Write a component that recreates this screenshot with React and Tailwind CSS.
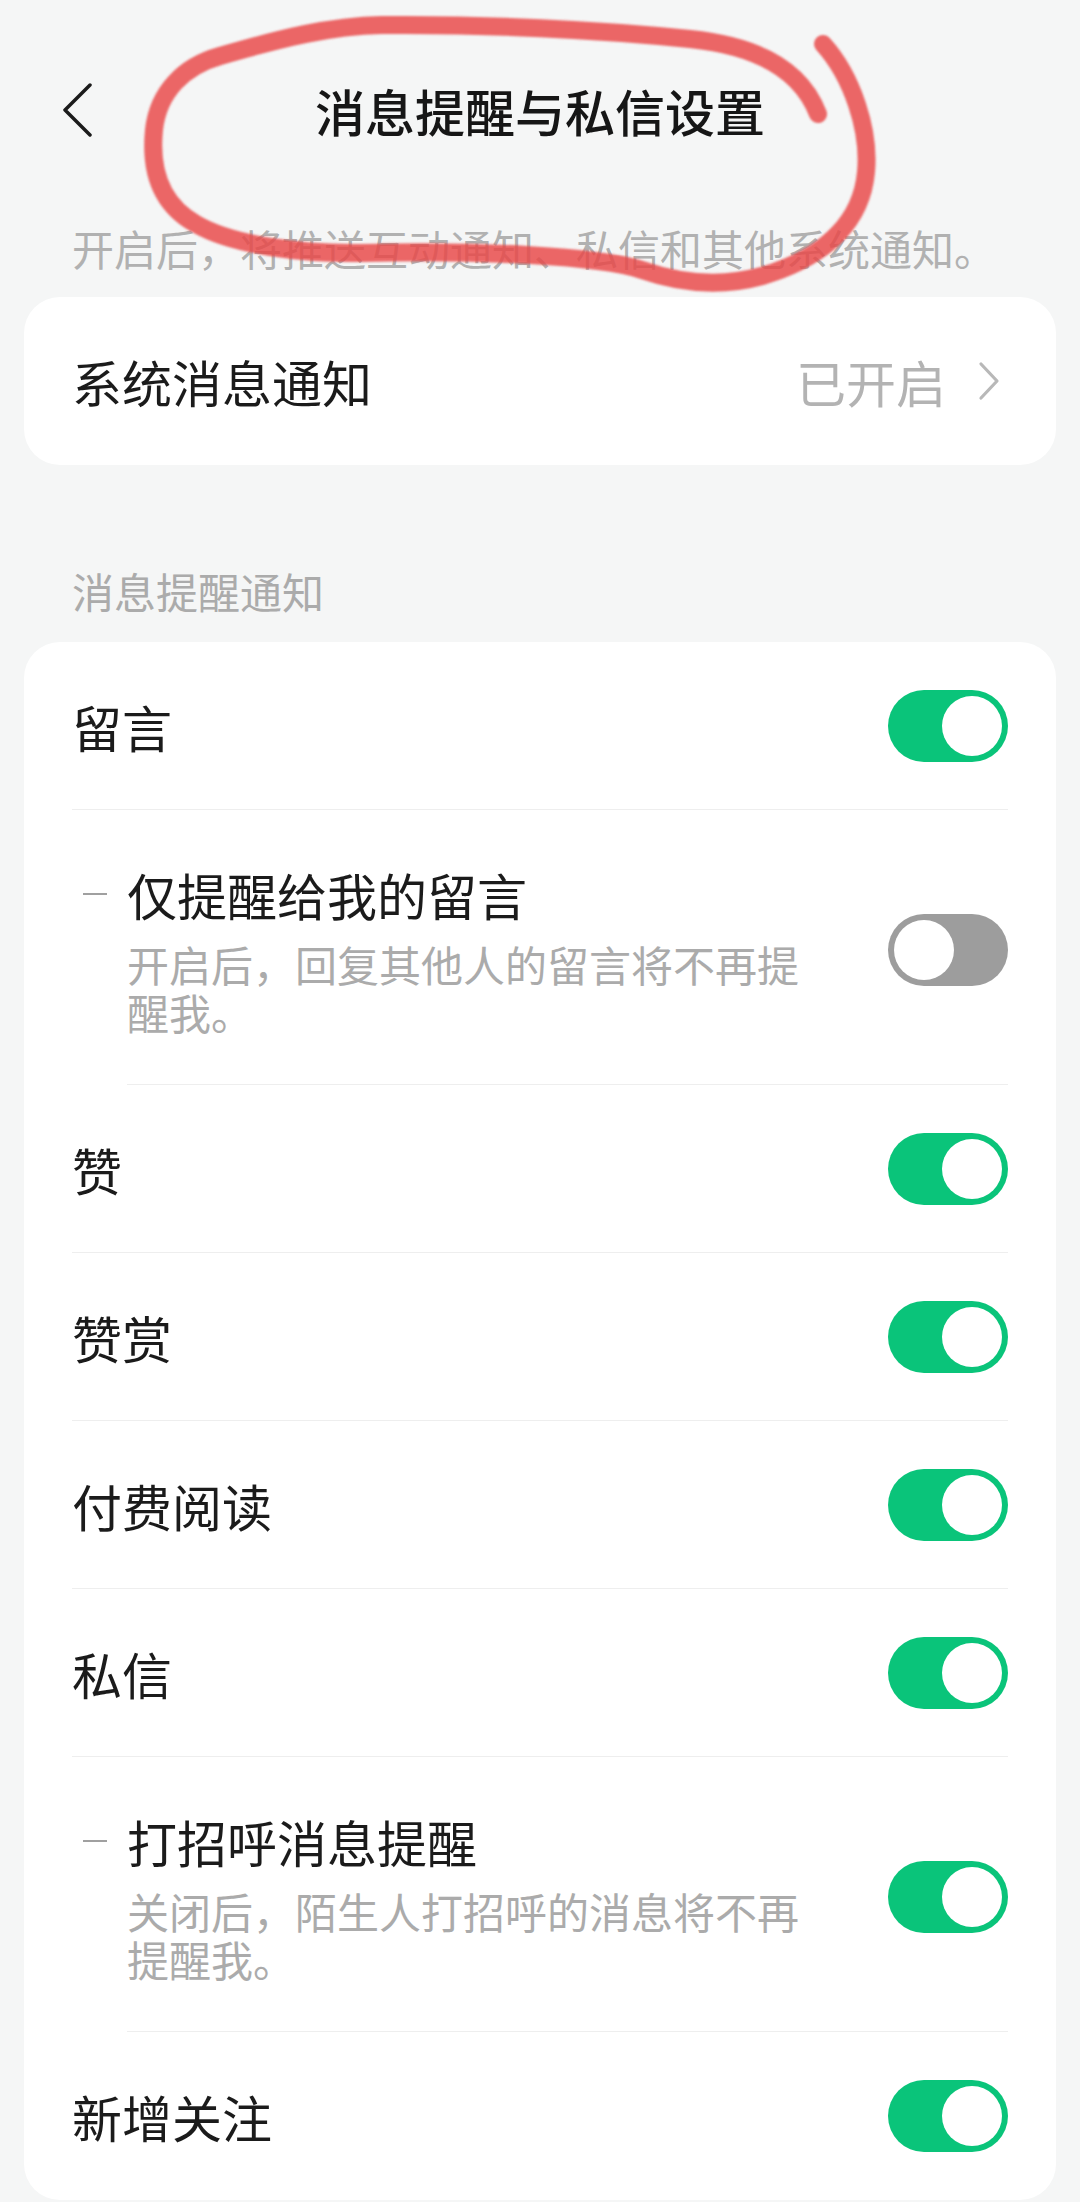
import React, { useState } from "react";

const items = [
  { key: "comment", label: "留言", on: true },
  {
    key: "onlyMine",
    label: "仅提醒给我的留言",
    desc: "开启后，回复其他人的留言将不再提醒我。",
    on: false,
    sub: true,
  },
  { key: "like", label: "赞", on: true },
  { key: "reward", label: "赞赏", on: true },
  { key: "paid", label: "付费阅读", on: true },
  { key: "dm", label: "私信", on: true },
  {
    key: "greet",
    label: "打招呼消息提醒",
    desc: "关闭后，陌生人打招呼的消息将不再提醒我。",
    on: true,
    sub: true,
  },
  { key: "follow", label: "新增关注", on: true },
];

function Toggle({ on, onClick }) {
  return (
    <button
      onClick={onClick}
      className={`flex h-[72px] w-[120px] shrink-0 items-center rounded-full p-[6px] ${
        on ? "justify-end bg-[#0ac47a]" : "justify-start bg-[#9d9d9d]"
      }`}
    >
      <span className="block h-[60px] w-[60px] rounded-full bg-white" />
    </button>
  );
}

export default function App() {
  const [state, setState] = useState(
    Object.fromEntries(items.map((i) => [i.key, i.on]))
  );
  const flip = (key) => () => setState((s) => ({ ...s, [key]: !s[key] }));

  return (
    <div className="relative min-h-[2202px] w-[1080px] overflow-hidden bg-[#f5f6f6] font-['Noto_Sans_CJK_SC','Noto_Sans',sans-serif] text-[#1b1b1b]">
      {/* header */}
      <header className="grid h-[220px] grid-cols-[1fr_auto_1fr] items-center">
        <div className="pl-[61px]">
          <svg width="32" height="54" viewBox="0 0 32 54" fill="none">
            <path
              d="M29 2 L4 27 L29 52"
              stroke="#1b1b1b"
              strokeWidth="3.5"
              strokeLinecap="round"
              strokeLinejoin="round"
            />
          </svg>
        </div>
        <h1 className="text-[50px] font-medium leading-[60px] text-[#161616]">
          消息提醒与私信设置
        </h1>
        <div />
      </header>

      <p className="px-[72px] text-[42px] leading-[56px] whitespace-nowrap text-[#b1b1b1]">
        开启后，将推送互动通知、私信和其他系统通知。
      </p>

      {/* system notification card */}
      <div className="mx-6 mt-[21px] flex h-[168px] items-center justify-between rounded-[36px] bg-white px-12">
        <span className="text-[50px] leading-[60px]">系统消息通知</span>
        <div className="flex items-center">
          <span className="text-[50px] leading-[60px] text-[#b3b3b3]">已开启</span>
          <svg className="ml-8 mr-2" width="22" height="40" viewBox="0 0 22 40" fill="none">
            <path
              d="M3 3 L19 20 L3 37"
              stroke="#b8b8b8"
              strokeWidth="3.2"
              strokeLinecap="round"
              strokeLinejoin="round"
            />
          </svg>
        </div>
      </div>

      <p className="mt-[98px] px-[72px] text-[42px] leading-[56px] text-[#ababab]">
        消息提醒通知
      </p>

      {/* reminder list */}
      <div className="mx-6 mt-[23px] rounded-[36px] bg-white px-12">
        {items.map((item, idx) => {
          const last = idx === items.length - 1;
          if (item.sub) {
            return (
              <div key={item.key} className="flex">
                <div className="w-[55px] shrink-0 pt-[54px]">
                  <div className="flex h-[60px] items-center pl-[11px]">
                    <div className="h-[2px] w-6 bg-[#a0a0a0]" />
                  </div>
                </div>
                <div className="flex flex-1 items-center justify-between border-b border-[#eeeeee] pt-[54px] pb-[48px]">
                  <div>
                    <div className="text-[50px] leading-[60px]">{item.label}</div>
                    <div className="mt-4 w-[680px] text-[42px] leading-[48px] text-[#ababab]">
                      {item.desc}
                    </div>
                  </div>
                  <Toggle on={state[item.key]} onClick={flip(item.key)} />
                </div>
              </div>
            );
          }
          return (
            <div
              key={item.key}
              className={`flex items-center justify-between ${
                last ? "h-[168px]" : "h-[168px] border-b border-[#eeeeee]"
              }`}
            >
              <span className="text-[50px] leading-[60px]">{item.label}</span>
              <Toggle on={state[item.key]} onClick={flip(item.key)} />
            </div>
          );
        })}
      </div>

      {/* hand-drawn red marker over the title */}
      <svg
        className="pointer-events-none absolute left-0 top-0"
        width="1080"
        height="320"
        viewBox="0 0 1080 320"
        fill="none"
      >
        <defs>
          <filter id="soft">
            <feGaussianBlur stdDeviation="1.2" />
          </filter>
        </defs>
        <path
          d="M823 44 C852 76, 870 130, 866 172 C862 218, 830 256, 762 276 C722 287, 682 284, 642 270 C600 256, 480 250, 362 253 C300 254, 232 245, 196 224 C160 204, 150 170, 154 130 C158 92, 184 66, 220 56 C282 38, 330 26, 382 25 C482 24, 602 30, 690 39 C760 46, 802 72, 818 114"
          stroke="#e94646"
          strokeOpacity="0.82"
          strokeWidth="18"
          strokeLinecap="round"
          strokeLinejoin="round"
          filter="url(#soft)"
        />
      </svg>
    </div>
  );
}
